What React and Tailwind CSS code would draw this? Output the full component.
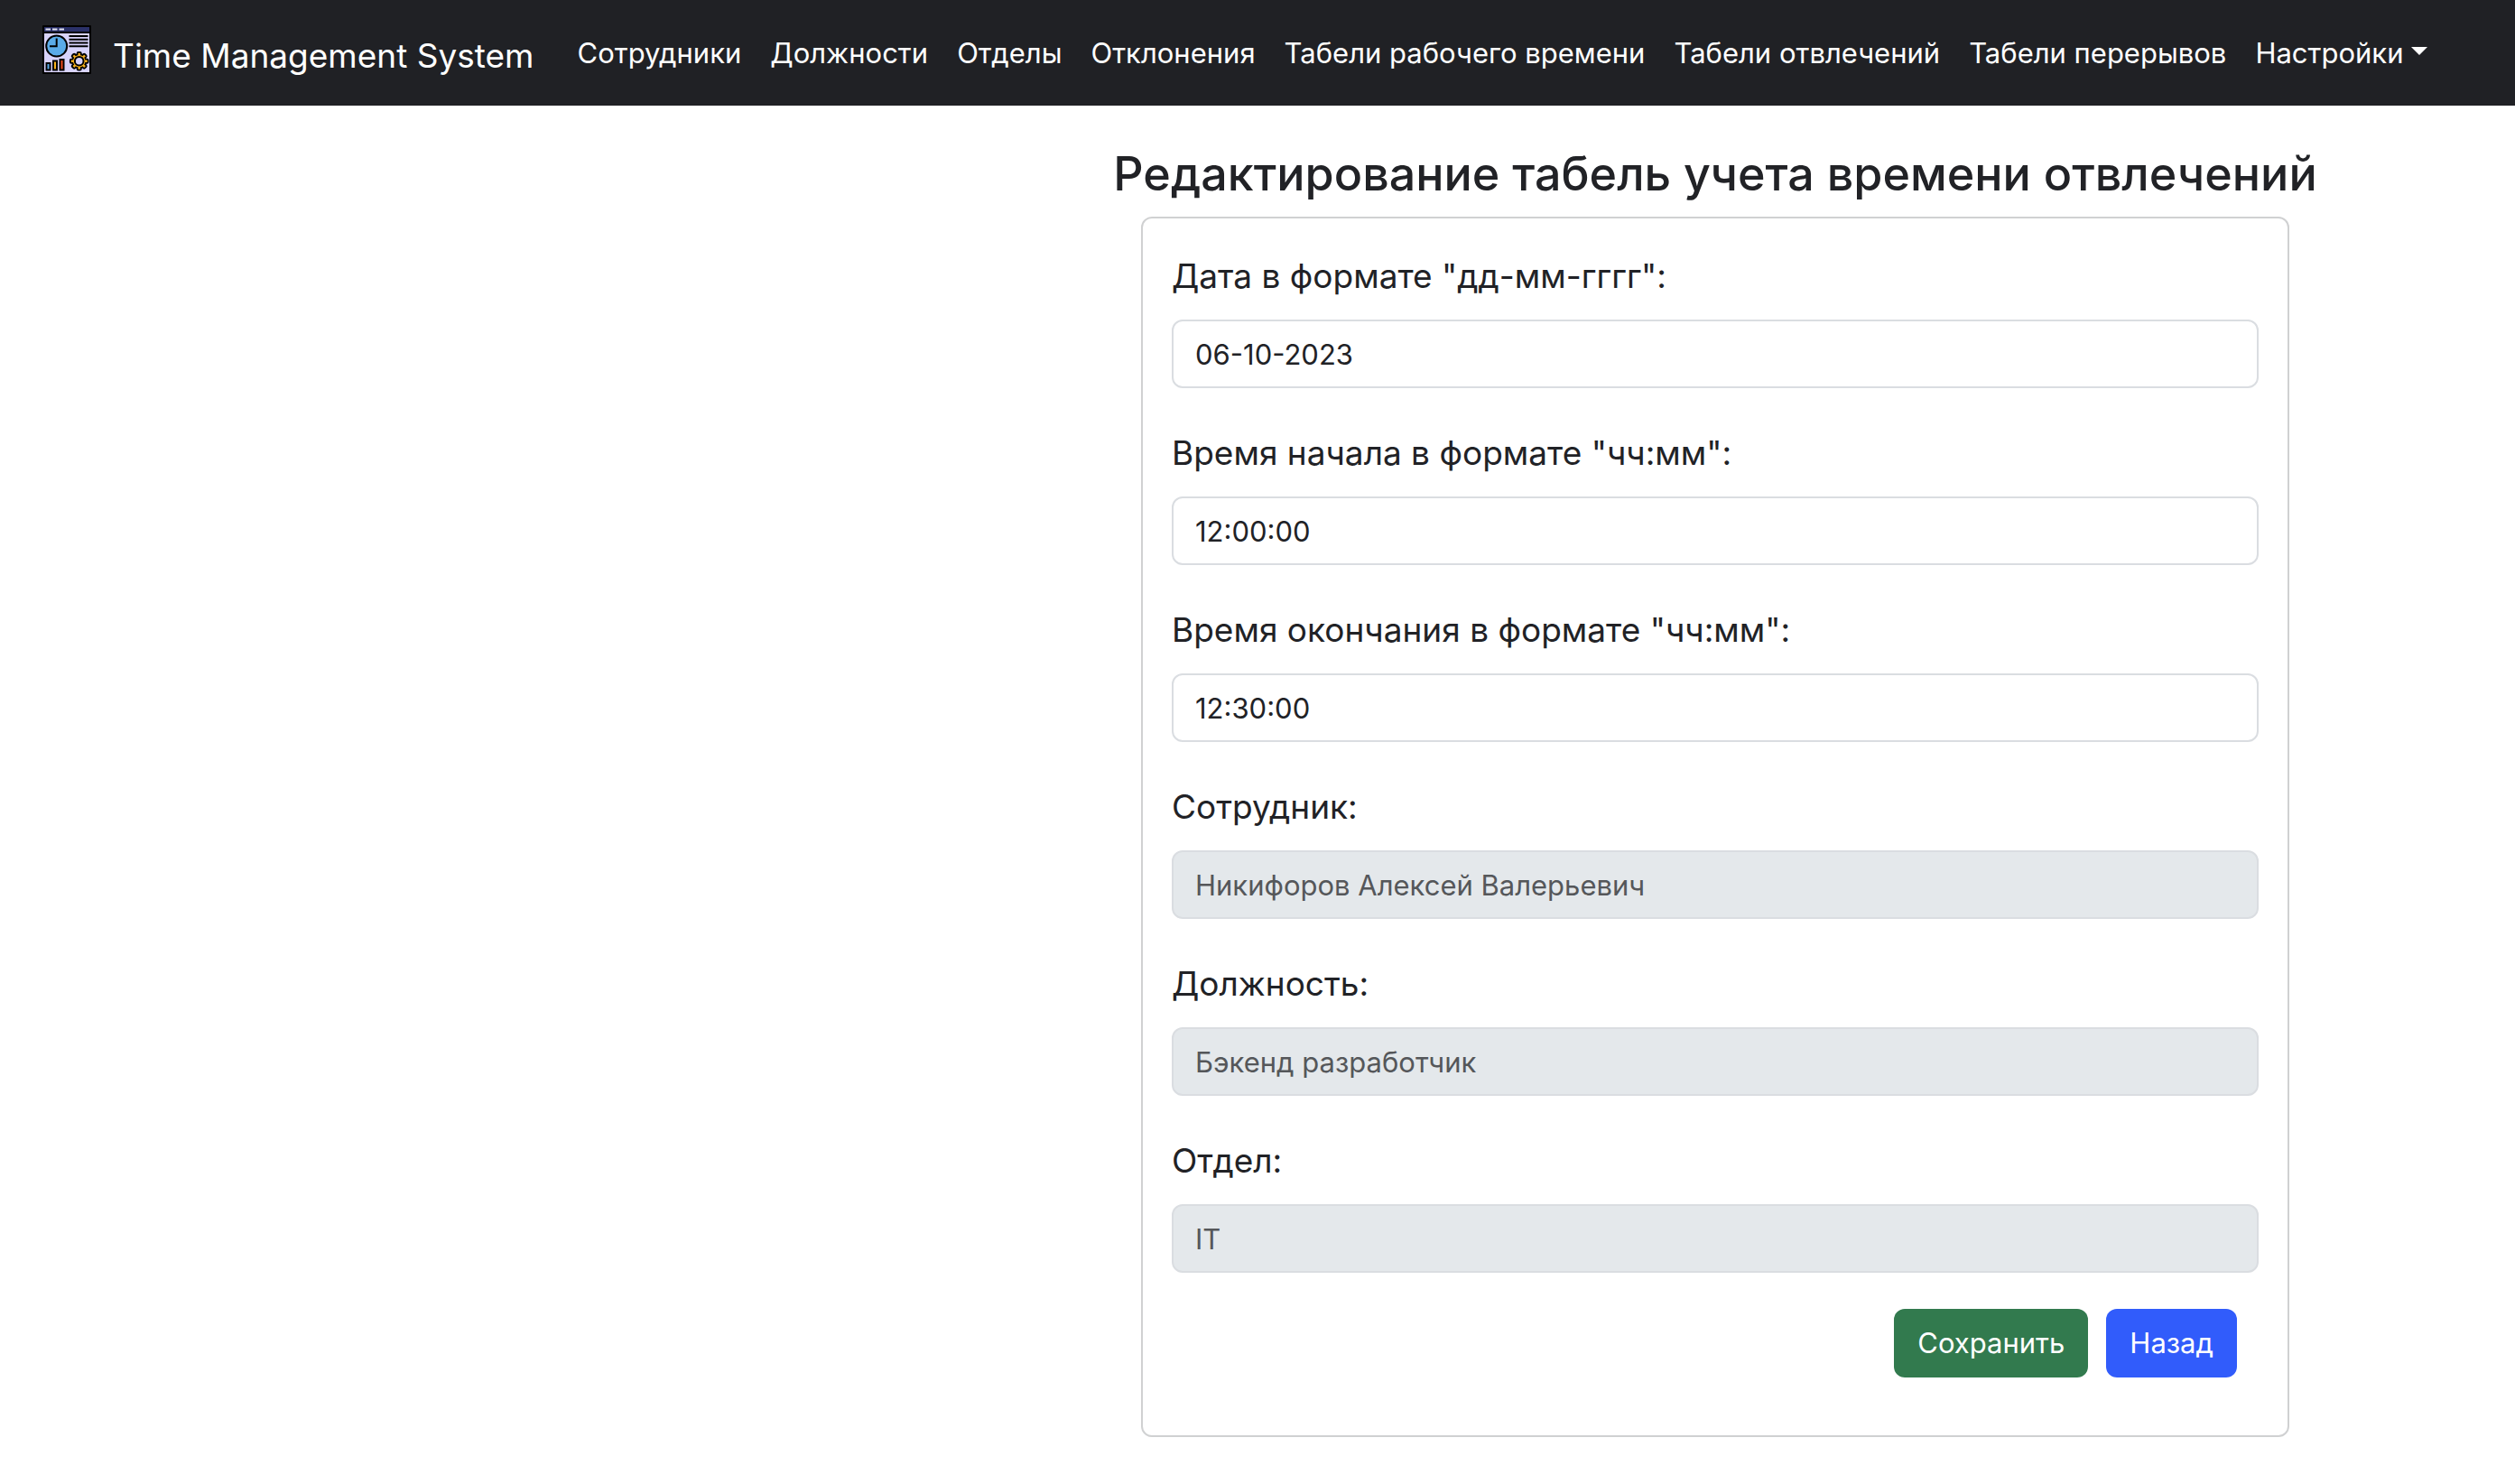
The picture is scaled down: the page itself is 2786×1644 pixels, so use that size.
const links = [
  'Сотрудники',
  'Должности',
  'Отделы',
  'Отклонения',
  'Табели рабочего времени',
  'Табели отвлечений',
  'Табели перерывов',
];

const fields = [
  { id: 'date', label: 'Дата в формате "дд-мм-гггг":', value: '06-10-2023' },
  { id: 'start', label: 'Время начала в формате "чч:мм":', value: '12:00:00' },
  { id: 'end', label: 'Время окончания в формате "чч:мм":', value: '12:30:00' },
  { id: 'employee', label: 'Сотрудник:', value: 'Никифоров Алексей Валерьевич', disabled: true },
  { id: 'position', label: 'Должность:', value: 'Бэкенд разработчик', disabled: true },
  { id: 'department', label: 'Отдел:', value: 'IT', disabled: true },
];

const teeth = [0, 45, 90, 135, 180, 225, 270, 315];

function Logo() {
  return (
    <svg viewBox="0 0 54 54" className="mb-2 size-[54px] shrink-0" aria-hidden="true">
      <rect width="54" height="54" rx="1" fill="#000" />
      <rect x="2" y="2" width="50" height="5" fill="#2b3168" />
      <path d="M3.5 4.5h5.5M11 4.5h5.5M18.5 4.5h5.5" stroke="#e4e4f4" strokeWidth="2" />
      <rect x="2" y="9" width="50" height="43" fill="#d8d3fb" />
      <circle cx="15.7" cy="23" r="11.5" fill="#5aabe8" stroke="#000" strokeWidth="2" />
      <path d="M15.7 14.5V23.3H8" fill="none" stroke="#000" strokeWidth="2" />
      <path d="M29.5 12h21M29.5 15.8h21M29.5 19.5h21M29.5 23.3h21" stroke="#000" strokeWidth="1.9" />
      <rect x="4.5" y="42" width="4" height="7.5" fill="#5aabe8" stroke="#000" strokeWidth="2" />
      <rect x="12" y="39.5" width="4" height="10" fill="#f9b21d" stroke="#000" strokeWidth="2" />
      <rect x="19.5" y="38" width="4" height="11.5" fill="#ee4b1e" stroke="#000" strokeWidth="2" />
      <g transform="translate(40.7 39.7)">
        {teeth.map((a) => (
          <rect key={a} x="-2" y="-9.8" width="4" height="5" rx="1" transform={`rotate(${a})`} fill="#f9b21d" stroke="#000" strokeWidth="2" />
        ))}
        <circle r="7.6" fill="#f9b21d" stroke="#000" strokeWidth="1.6" />
        {teeth.map((a) => (
          <rect key={a} x="-1.2" y="-8.8" width="2.4" height="3" transform={`rotate(${a})`} fill="#f9b21d" />
        ))}
        <circle r="4.8" fill="#d8d3fb" stroke="#000" strokeWidth="2" />
      </g>
    </svg>
  );
}

function Field({ id, label, value, disabled }) {
  return (
    <div className="mb-8">
      <label htmlFor={id} className="mb-[18px] block pt-[10px] text-[37px] leading-[60px]">
        {label}
      </label>
      <input
        id={id}
        type="text"
        defaultValue={value}
        disabled={disabled}
        className="block h-[76px] w-full rounded-xl border-2 border-[#dadde1] bg-white px-6 text-[31px] disabled:bg-[#e4e8eb] disabled:text-[#55575a]"
      />
    </div>
  );
}

export default function App() {
  return (
    <div className="min-h-screen bg-white font-['Inter','Liberation_Sans',sans-serif] text-[#212226]">
      <header className="flex h-[117px] items-center bg-[#202125] pl-[47px] text-white">
        <a href="#" className="flex items-center gap-6 text-[37px] leading-[60px] whitespace-nowrap">
          <Logo />
          <span className="pt-1.5">Time Management System</span>
        </a>
        <nav className="ml-12 flex items-center gap-8 text-[31px] leading-[48px] whitespace-nowrap">
          {links.map((text) => (
            <a key={text} href="#">
              {text}
            </a>
          ))}
          <button type="button" className="flex items-center gap-2">
            Настройки
            <svg viewBox="0 0 18 9" className="mb-1 h-[9px] w-[18px]" aria-hidden="true">
              <path d="M0 0H18L9 9Z" fill="#fff" />
            </svg>
          </button>
        </nav>
      </header>

      <main className="grid grid-cols-[1240fr_1320fr_226fr] pt-[42px]">
        <div className="col-start-2 min-w-0 px-6">
          <h3 className="mb-[14px] flex justify-center text-[52px] leading-[67px] font-medium whitespace-nowrap">
            Редактирование табель учета времени отвлечений
          </h3>
          <form className="rounded-xl border-2 border-[#d0d1d2] px-8 pt-6 pb-16">
            {fields.map((f) => (
              <Field key={f.id} {...f} />
            ))}
            <div className="mt-10 flex justify-end gap-5 pr-6 text-[31px] leading-[48px] text-white">
              <button type="submit" className="rounded-xl bg-[#327a4e] px-[26px] py-[14px]">
                Сохранить
              </button>
              <button type="button" className="rounded-xl bg-[#315cfb] px-[26px] py-[14px]">
                Назад
              </button>
            </div>
          </form>
        </div>
      </main>
    </div>
  );
}
